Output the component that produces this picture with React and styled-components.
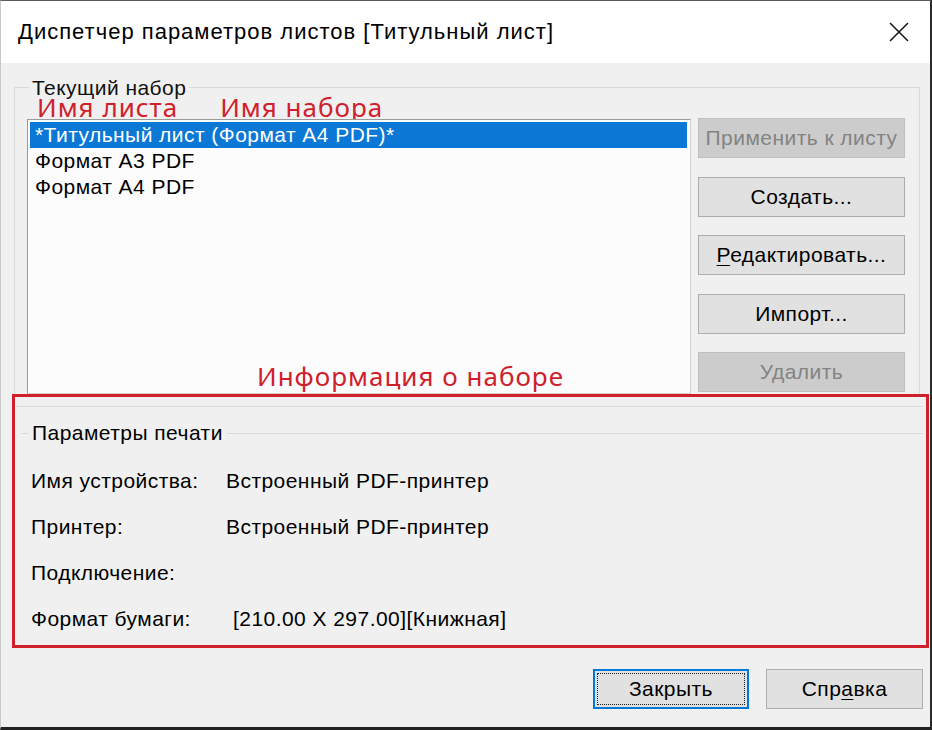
import React from 'react'
import styled, { createGlobalStyle } from 'styled-components'

const GlobalStyle = createGlobalStyle`
  html, body {
    margin: 0;
    padding: 0;
    background: #f0f0f0;
  }
  * {
    box-sizing: border-box;
  }
`

const Window = styled.div`
  display: flex;
  flex-direction: column;
  width: 932px;
  height: 730px;
  border-top: 1px solid #5a5a5a;
  border-left: 1px solid #c8c8c8;
  border-right: 2px solid #2b2b2b;
  border-bottom: 3px solid #222;
  background: #f0f0f0;
  font-family: "Liberation Sans", Arial, sans-serif;
  font-size: 21px;
  letter-spacing: 0.45px;
  color: #000;
  overflow: hidden;
`

const TitleBar = styled.div`
  display: flex;
  align-items: center;
  justify-content: space-between;
  height: 62px;
  flex-shrink: 0;
  padding: 0 21px 0 17px;
  background: #fff;
`

const Title = styled.div`
  font-size: 22px;
  letter-spacing: 1px;
`

const Body = styled.div`
  display: flex;
  flex-direction: column;
  flex: 1;
  padding: 14px 1px 0 11px;
`

const CurrentGroup = styled.fieldset`
  margin: 0 9px 0 2px;
  padding: 0 14px 0 12px;
  border: 1px solid #d9d9d9;
  border-bottom: none;
  min-width: 0;
`

const Legend = styled.legend`
  margin-left: 2px;
  padding: 0 3px;
  font-size: 21px;
  line-height: 21px;
  color: #111;
`

const Notes = styled.div`
  display: flex;
  gap: 42px;
  height: 24px;
  margin: -3px 0 0 10px;
`

const Note = styled.span`
  font-family: "Noto Sans", "Open Sans", sans-serif;
  font-size: 26px;
  line-height: 24px;
  letter-spacing: 1px;
  color: #d0202c;
`

const MainRow = styled.div`
  display: flex;
  gap: 7px;
  height: 275px;
`

const ListBox = styled.div`
  position: relative;
  flex: 1;
  padding: 2px 3px 2px 2px;
  background: #fcfcfc;
  border: 1px solid #9a9a9a;
  border-right-color: #d0d0d0;
  border-bottom-color: #d0d0d0;
`

const ListItem = styled.div`
  height: 26px;
  padding-left: 5px;
  line-height: 26px;
  white-space: nowrap;
  background: ${({ selected }) => (selected ? '#0a78d4' : 'transparent')};
  color: ${({ selected }) => (selected ? '#fff' : '#000')};
`

const AreaNote = styled.span`
  position: absolute;
  left: 229px;
  bottom: 2px;
  font-family: "Noto Sans", "Open Sans", sans-serif;
  font-size: 26px;
  line-height: 30px;
  letter-spacing: 1px;
  color: #d0202c;
`

const ButtonColumn = styled.div`
  display: flex;
  flex-direction: column;
  justify-content: space-between;
  width: 207px;
  padding: 0 0 2px 0;
  margin-top: -1px;
`

const Button = styled.button`
  display: flex;
  align-items: center;
  justify-content: center;
  height: 40px;
  width: ${({ width }) => width || '100%'};
  padding: 0;
  font-family: "Liberation Sans", Arial, sans-serif;
  font-size: 21px;
  letter-spacing: 0.45px;
  white-space: nowrap;
  background: ${({ disabled }) => (disabled ? '#cccccc' : '#e1e1e1')};
  border: 1px solid ${({ disabled }) => (disabled ? '#bfbfbf' : '#adadad')};
  color: ${({ disabled }) => (disabled ? '#838383' : '#000')};
  border-radius: 0;

  u {
    text-decoration-thickness: 1px;
    text-underline-offset: 3px;
  }
`

const DefaultButton = styled(Button)`
  position: relative;
  border: 2px solid #0078d7;

  &::after {
    content: '';
    position: absolute;
    inset: 2px;
    border: 1px dotted #222;
  }
`

const InfoFrame = styled.div`
  display: flex;
  flex-direction: column;
  height: 254px;
  border: 3px solid #d0202c;
  padding: 0 3px 0 1px;
`

const Divider = styled.div`
  height: 1px;
  margin-top: 9px;
  background: #d9d9d9;
`

const PrintGroup = styled.fieldset`
  margin: 14px 0 0 5px;
  padding: 0;
  border: none;
  border-top: 1px solid #d9d9d9;
  min-width: 0;
`

const PrintLegend = styled.legend`
  margin-left: 7px;
  padding: 0 4px;
  font-size: 21px;
  line-height: 24px;
`

const InfoGrid = styled.div`
  display: grid;
  grid-template-columns: 195px 1fr;
  grid-auto-rows: 46px;
  align-items: center;
  margin: 13px 0 0 10px;
`

const Value = styled.span`
  padding-left: ${({ indent }) => indent || 0}px;
`

const Footer = styled.div`
  display: flex;
  justify-content: flex-end;
  gap: 17px;
  padding: 21px 6px 0 0;
`

function CloseIcon() {
  return (
    <svg width="20" height="20" viewBox="0 0 20 20">
      <path d="M1 1 L19 19 M19 1 L1 19" stroke="#111" strokeWidth="1.5" fill="none" />
    </svg>
  )
}

const sets = [
  { name: '*Титульный лист (Формат А4 PDF)*', selected: true },
  { name: 'Формат А3 PDF' },
  { name: 'Формат А4 PDF' }
]

const info = [
  { label: 'Имя устройства:', value: 'Встроенный PDF-принтер' },
  { label: 'Принтер:', value: 'Встроенный PDF-принтер' },
  { label: 'Подключение:', value: '' },
  { label: 'Формат бумаги:', value: '[210.00 X 297.00][Книжная]', indent: 7 }
]

export default function App() {
  return (
    <>
      <GlobalStyle />
      <Window>
        <TitleBar>
          <Title>Диспетчер параметров листов [Титульный лист]</Title>
          <CloseIcon />
        </TitleBar>
        <Body>
          <CurrentGroup>
            <Legend>Текущий набор</Legend>
            <Notes>
              <Note>Имя листа</Note>
              <Note>Имя набора</Note>
            </Notes>
            <MainRow>
              <ListBox>
                {sets.map((s) => (
                  <ListItem key={s.name} selected={s.selected}>{s.name}</ListItem>
                ))}
                <AreaNote>Информация о наборе</AreaNote>
              </ListBox>
              <ButtonColumn>
                <Button disabled>Применить к листу</Button>
                <Button>Создать...</Button>
                <Button><span><u>Р</u>едактировать...</span></Button>
                <Button>Импорт...</Button>
                <Button disabled>Удалить</Button>
              </ButtonColumn>
            </MainRow>
          </CurrentGroup>
          <InfoFrame>
            <Divider />
            <PrintGroup>
              <PrintLegend>Параметры печати</PrintLegend>
              <InfoGrid>
                {info.map((row) => (
                  <React.Fragment key={row.label}>
                    <span>{row.label}</span>
                    <Value indent={row.indent}>{row.value}</Value>
                  </React.Fragment>
                ))}
              </InfoGrid>
            </PrintGroup>
          </InfoFrame>
          <Footer>
            <DefaultButton width="156px">Закрыть</DefaultButton>
            <Button width="157px"><span>Спр<u>а</u>вка</span></Button>
          </Footer>
        </Body>
      </Window>
    </>
  )
}
